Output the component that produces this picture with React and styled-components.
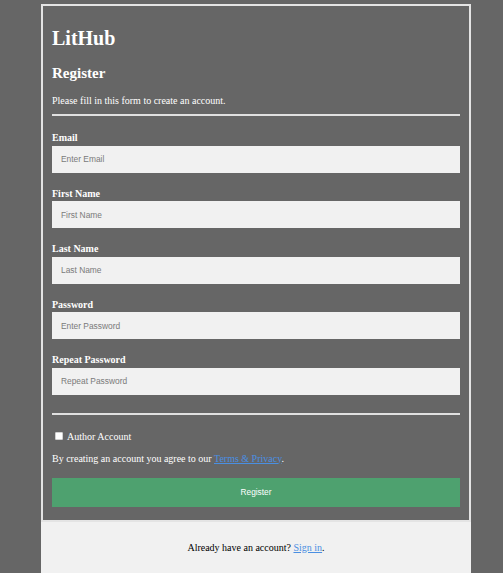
import React from 'react'
import styled, { createGlobalStyle } from 'styled-components'

const GlobalStyle = createGlobalStyle`
  html, body {
    margin: 0;
    background: #666666;
    font-family: "Liberation Serif", "Times New Roman", serif;
  }
`

const Page = styled.div`
  padding: 4px 0 0 41px;
`
const Wrapper = styled.div`
  width: 430px;
`
const Form = styled.form`
  border: 2px solid #e4e4e4;
  padding: 0 9px 13px;
  color: #ffffff;
`
const Title = styled.h1`
  margin: 21px 0 0;
  font-size: 20px;
  line-height: 23px;
  font-weight: bold;
`
const Subtitle = styled.h2`
  margin: 14px 0 0;
  font-size: 15px;
  line-height: 18px;
  font-weight: bold;
`
const Text = styled.p`
  margin: ${p => p.$top || 0}px 0 0;
  font-size: 10px;
  line-height: 13px;
`
const Divider = styled.div`
  height: 2px;
  background: #e0e0e0;
  margin: ${p => p.$top}px 0 ${p => p.$bottom}px;
`
const Label = styled.label`
  display: block;
  font-size: 10px;
  line-height: 13px;
  font-weight: bold;
`
const Input = styled.input`
  display: block;
  box-sizing: border-box;
  width: 100%;
  height: 27px;
  margin: 1.5px 0 14px;
  padding: 0 9px;
  border: none;
  outline: none;
  background: #f1f1f1;
  font-family: "Liberation Sans", Arial, sans-serif;
  font-size: 8.4px;
  &::placeholder {
    color: #7a7a7a;
  }
`
const CheckRow = styled.label`
  display: flex;
  align-items: center;
  font-size: 10px;
  line-height: 13px;
`
const Check = styled.input`
  appearance: none;
  width: 8px;
  height: 8px;
  margin: 0 4px 1px 3px;
  background: #ffffff;
  border: 1px solid #d0d0d0;
  border-radius: 1px;
  box-sizing: border-box;
`
const Link = styled.a`
  color: #4a8fe2;
  text-decoration: underline;
`
const Button = styled.button`
  display: block;
  width: 100%;
  height: 29px;
  margin-top: 13px;
  border: none;
  background: #4ea16f;
  color: #ffffff;
  font-family: "Liberation Sans", Arial, sans-serif;
  font-size: 8.3px;
  cursor: pointer;
`
const Footer = styled.div`
  background: #f1f1f1;
  text-align: center;
  padding: 19px 0 20px;
  font-size: 10px;
  line-height: 13px;
  color: #000000;
`

const fields = [
  { label: 'Email', placeholder: 'Enter Email', type: 'text' },
  { label: 'First Name', placeholder: 'First Name', type: 'text' },
  { label: 'Last Name', placeholder: 'Last Name', type: 'text' },
  { label: 'Password', placeholder: 'Enter Password', type: 'password' },
  { label: 'Repeat Password', placeholder: 'Repeat Password', type: 'password' },
]

export default function App() {
  return (
    <>
      <GlobalStyle />
      <Page>
        <Wrapper>
          <Form onSubmit={e => e.preventDefault()}>
            <Title>LitHub</Title>
            <Subtitle>Register</Subtitle>
            <Text $top={12}>Please fill in this form to create an account.</Text>
            <Divider $top={7} $bottom={15} />
            {fields.map(f => (
              <div key={f.label}>
                <Label>{f.label}</Label>
                <Input type={f.type} placeholder={f.placeholder} />
              </div>
            ))}
            <Divider $top={18} $bottom={15} />
            <CheckRow>
              <Check type='checkbox' />
              Author Account
            </CheckRow>
            <Text $top={9}>
              By creating an account you agree to our <Link href='#'>Terms &amp; Privacy</Link>.
            </Text>
            <Button type='submit'>Register</Button>
          </Form>
          <Footer>
            Already have an account? <Link href='#'>Sign in</Link>.
          </Footer>
        </Wrapper>
      </Page>
    </>
  )
}
